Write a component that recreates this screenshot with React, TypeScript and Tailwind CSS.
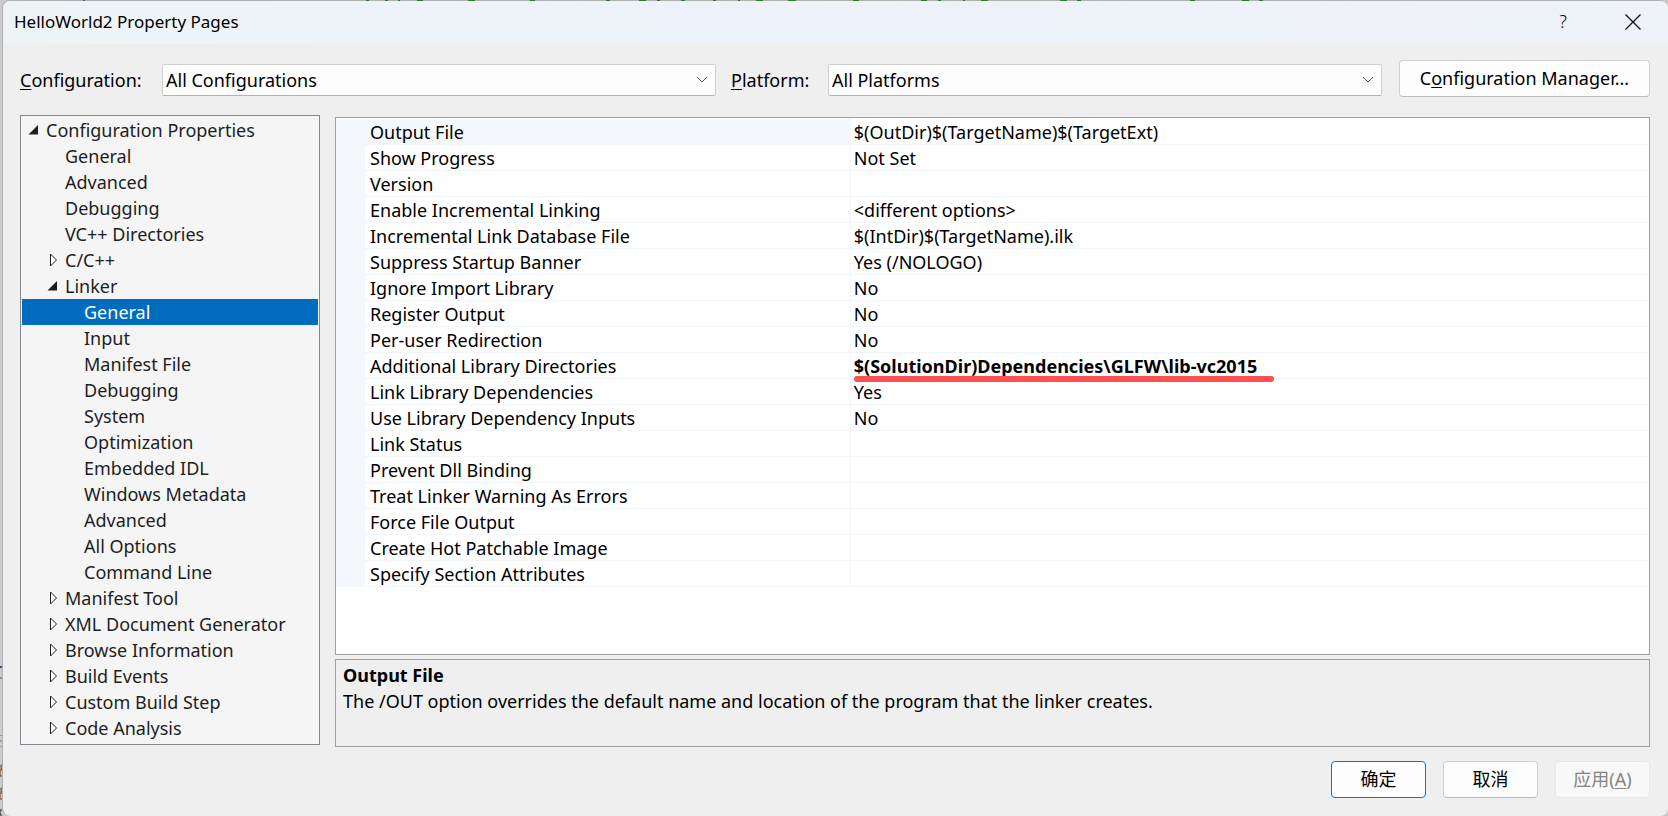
import { useState } from "react";

type TreeNode = {
  label: string;
  level: 0 | 1 | 2;
  state?: "open" | "closed";
};

const treeNodes: TreeNode[] = [
  { label: "Configuration Properties", level: 0, state: "open" },
  { label: "General", level: 1 },
  { label: "Advanced", level: 1 },
  { label: "Debugging", level: 1 },
  { label: "VC++ Directories", level: 1 },
  { label: "C/C++", level: 1, state: "closed" },
  { label: "Linker", level: 1, state: "open" },
  { label: "General", level: 2 },
  { label: "Input", level: 2 },
  { label: "Manifest File", level: 2 },
  { label: "Debugging", level: 2 },
  { label: "System", level: 2 },
  { label: "Optimization", level: 2 },
  { label: "Embedded IDL", level: 2 },
  { label: "Windows Metadata", level: 2 },
  { label: "Advanced", level: 2 },
  { label: "All Options", level: 2 },
  { label: "Command Line", level: 2 },
  { label: "Manifest Tool", level: 1, state: "closed" },
  { label: "XML Document Generator", level: 1, state: "closed" },
  { label: "Browse Information", level: 1, state: "closed" },
  { label: "Build Events", level: 1, state: "closed" },
  { label: "Custom Build Step", level: 1, state: "closed" },
  { label: "Code Analysis", level: 1, state: "closed" },
];

const properties = [
  { name: "Output File", value: "$(OutDir)$(TargetName)$(TargetExt)" },
  { name: "Show Progress", value: "Not Set" },
  { name: "Version", value: "" },
  { name: "Enable Incremental Linking", value: "<different options>" },
  { name: "Incremental Link Database File", value: "$(IntDir)$(TargetName).ilk" },
  { name: "Suppress Startup Banner", value: "Yes (/NOLOGO)" },
  { name: "Ignore Import Library", value: "No" },
  { name: "Register Output", value: "No" },
  { name: "Per-user Redirection", value: "No" },
  {
    name: "Additional Library Directories",
    value: "$(SolutionDir)Dependencies\\GLFW\\lib-vc2015",
    marked: true,
  },
  { name: "Link Library Dependencies", value: "Yes" },
  { name: "Use Library Dependency Inputs", value: "No" },
  { name: "Link Status", value: "" },
  { name: "Prevent Dll Binding", value: "" },
  { name: "Treat Linker Warning As Errors", value: "" },
  { name: "Force File Output", value: "" },
  { name: "Create Hot Patchable Image", value: "" },
  { name: "Specify Section Attributes", value: "" },
];

const indents = { 0: "pl-[5px]", 1: "pl-6", 2: "pl-[43px]" };

// [x, width] of the code fragments that peek out above the dialog
const codeSpecks = [
  [366, 3], [385, 3], [398, 2], [417, 6], [468, 7], [530, 5], [606, 4],
  [639, 7], [657, 3], [681, 4], [713, 3], [738, 2], [756, 7], [788, 8],
  [853, 6], [921, 6], [938, 3], [963, 2], [981, 7], [1060, 7], [1077, 4],
  [1190, 5], [1242, 7], [1259, 4],
];

const Arrow = ({ state }: { state?: "open" | "closed" }) => (
  <svg
    width="12"
    height="14"
    viewBox="0 0 12 14"
    className="shrink-0"
    aria-hidden="true"
  >
    {state === "open" && <path d="M11 2v9.500H1.500z" fill="#1e1e1e" />}
    {state === "closed" && (
      <path d="M4.500 1v12l6-6z" fill="#fff" stroke="#1e1e1e" />
    )}
  </svg>
);

const Backdrop = () => (
  <>
    <svg
      width="1300"
      height="1"
      className="absolute left-0 top-0 z-10"
      aria-hidden="true"
    >
      <rect x="83" width="2" height="1" fill="#5b4a9c" />
      {codeSpecks.map(([x, w]) => (
        <rect key={x} x={x} width={w} height="1" fill="#2f7d32" />
      ))}
    </svg>
    <svg
      width="2"
      height="156"
      className="absolute left-0 top-[660px]"
      aria-hidden="true"
    >
      <rect y="6" width="2" height="2" fill="#4c3fa0" />
      <rect y="17" width="2" height="2" fill="#8f8f8f" />
      <rect y="75" width="2" height="1" fill="#9a9a9a" />
      <rect y="80" width="2" height="2" fill="#a4a4a4" />
      <rect y="86" width="2" height="1" fill="#a4a4a4" />
      <path d="M2 105H1v4h1M2 110H0v6h2" stroke="#7a3f1d" fill="none" />
      <path d="M2 128H1v4h1M2 133H0v6h2" stroke="#7a3f1d" fill="none" />
      <path d="M2 150H0v5h2" stroke="#222" fill="none" />
    </svg>
  </>
);

type ComboProps = {
  id: string;
  accessKey: string;
  rest: string;
  option: string;
  labelWidth: string;
};

const Combo = ({ id, accessKey, rest, option, labelWidth }: ComboProps) => (
  <>
    <label htmlFor={id} className={labelWidth}>
      <u className="underline-offset-2">{accessKey}</u>
      {rest}
    </label>
    <div className="relative">
      <select
        id={id}
        className="block h-8 w-full appearance-none rounded-xs border border-[#d0d0d0] border-b-[#b4b4b4] bg-[#fdfdfd] pl-[3px] pr-8 outline-none"
      >
        <option>{option}</option>
      </select>
      <svg
        width="12"
        height="8"
        viewBox="0 0 12 8"
        className="pointer-events-none absolute right-2 top-3"
        aria-hidden="true"
      >
        <path d="M1 1l5 5 5-5" fill="none" stroke="#5f5f5f" />
      </svg>
    </div>
  </>
);

const PropertyTree = () => {
  const [selected, setSelected] = useState(7);

  return (
    <ul
      role="tree"
      aria-label="Configuration Properties"
      className="w-[300px] shrink-0 border border-[#828790] bg-[#f5f5f5] px-px pt-px pb-[3px] text-[#1e1e1e]"
    >
      {treeNodes.map((node, i) => (
        <li key={i} role="none">
          <button
            type="button"
            role="treeitem"
            aria-selected={i === selected}
            onClick={() => setSelected(i)}
            className={`flex h-[26px] w-full items-center gap-[7px] whitespace-nowrap text-left ${
              indents[node.level]
            } ${i === selected ? "bg-[#006cbe] text-white" : ""}`}
          >
            <Arrow state={node.state} />
            {node.label}
          </button>
        </li>
      ))}
    </ul>
  );
};

const PropertyGrid = () => (
  <div className="flex-1 border border-[#a0a0a0] bg-white pt-px">
    <table className="w-full table-fixed border-separate border-spacing-0 leading-6">
      <colgroup>
        <col className="w-[29px]" />
        <col className="w-[37%]" />
        <col />
      </colgroup>
      <tbody>
        {properties.map((prop, i) => (
          <tr key={prop.name}>
            <td className="h-[26px] bg-[#f4f7fc] p-0" />
            <th
              scope="row"
              className={`h-[26px] whitespace-nowrap border-b border-r border-[#f2f5fb] p-0 pt-px pl-[5px] text-left font-normal ${
                i === 0 ? "bg-[#f4f7fc]" : ""
              }`}
            >
              {prop.name}
            </th>
            <td className="h-[26px] whitespace-nowrap border-b border-[#f2f5fb] p-0 pt-px pl-[3px]">
              {prop.marked ? (
                <span className="relative block font-bold">
                  {prop.value}
                  <span className="absolute left-0 top-[22px] h-1.5 w-[420px] rounded-full bg-[#fb5151]" />
                </span>
              ) : (
                prop.value
              )}
            </td>
          </tr>
        ))}
      </tbody>
    </table>
  </div>
);

export default function App() {
  return (
    <div className="relative flex min-h-screen flex-col bg-[#cbcbcb] pl-0.5 font-['Noto_Sans','Noto_Sans_CJK_SC',sans-serif] text-[18px] leading-[25px] text-black">
      <Backdrop />
      <main className="relative flex flex-1 flex-col overflow-hidden rounded-lg border-l border-t border-[#b0b0b0] bg-[#efefef]">
        <header className="flex h-[43px] items-center justify-between bg-linear-to-r from-[#eef4f6] via-[#edf2fb] via-50% to-[#eff3f7] pb-0.5">
          <h1 className="pl-[11px] text-[17px]">HelloWorld2 Property Pages</h1>
          <div className="flex h-full">
            <button
              type="button"
              aria-label="Help"
              className="w-[70px] font-light"
            >
              ?
            </button>
            <button
              type="button"
              aria-label="Close"
              className="flex w-[70px] items-center justify-center"
            >
              <svg width="16" height="16" viewBox="0 0 16 16" aria-hidden="true">
                <path
                  d="M.500.500l15 15M15.500.500l-15 15"
                  stroke="#111"
                  strokeWidth="1.300"
                />
              </svg>
            </button>
          </div>
        </header>

        <form
          className="flex flex-1 flex-col pt-4 pr-[18px] pb-[18px] pl-[17px]"
          onSubmit={(e) => e.preventDefault()}
        >
          <div className="flex items-end">
            <div className="grid flex-1 grid-cols-[auto_1fr_auto_1fr] items-center pb-px">
              <Combo
                id="configuration"
                accessKey="C"
                rest="onfiguration:"
                option="All Configurations"
                labelWidth="w-[142px]"
              />
              <Combo
                id="platform"
                accessKey="P"
                rest="latform:"
                option="All Platforms"
                labelWidth="ml-[15px] w-[97px]"
              />
            </div>
            <button
              type="button"
              className="ml-[17px] h-[37px] w-[251px] rounded-sm border border-[#d0d0d0] border-b-[#bcbcbc] bg-[#fdfdfd]"
            >
              C<u className="underline-offset-2">o</u>nfiguration Manager...
            </button>
          </div>

          <div className="mt-[18px] flex flex-1 items-start gap-[15px]">
            <PropertyTree />
            <div className="flex min-w-0 flex-1 flex-col gap-1 self-stretch pt-0.5">
              <PropertyGrid />
              <section className="h-[88px] border border-[#a0a0a0] px-[7px] pt-0.5">
                <h2 className="leading-[26px] font-bold">Output File</h2>
                <p className="leading-[26px]">
                  The /OUT option overrides the default name and location of the
                  program that the linker creates.
                </p>
              </section>
            </div>
          </div>

          <div className="mt-3.5 flex justify-end gap-[17px]">
            <button
              type="submit"
              className="h-[37px] w-[95px] rounded-sm border border-[#0078d4] bg-[#fdfdfd]"
            >
              确定
            </button>
            <button
              type="button"
              className="h-[37px] w-[95px] rounded-sm border border-[#d0d0d0] border-b-[#bcbcbc] bg-[#fdfdfd]"
            >
              取消
            </button>
            <button
              type="button"
              disabled
              className="h-[37px] w-[95px] rounded-sm border border-[#e8e8e8] bg-[#f9f9f9] text-[#838383]"
            >
              应用(<u className="underline-offset-2">A</u>)
            </button>
          </div>
        </form>
      </main>
    </div>
  );
}
